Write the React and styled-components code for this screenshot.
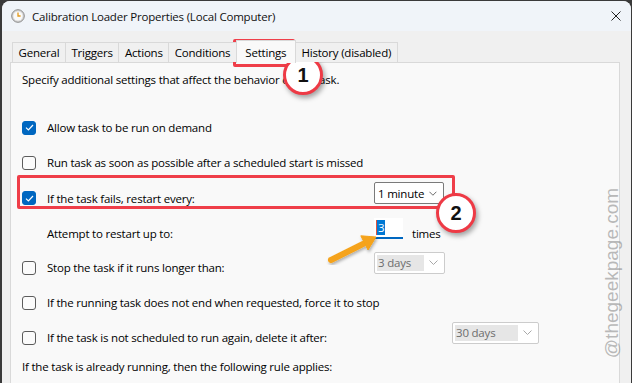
import React from 'react';
import styled, { createGlobalStyle } from 'styled-components';

const GlobalStyle = createGlobalStyle`
  html, body {
    margin: 0;
    height: 100%;
    overflow: hidden;
    background: #3a3a3a;
  }
  body {
    font-family: 'Open Sans', 'Noto Sans', sans-serif;
    font-size: 11.5px;
    letter-spacing: -0.2px;
    color: #000;
  }
  #root {
    height: 100%;
  }
`;

const Page = styled.div`
  position: relative;
  height: 100%;
`;

const Window = styled.div`
  display: flex;
  flex-direction: column;
  height: calc(100% - 1px);
  margin: 1px 1px 0 2px;
  border-radius: 8px 8px 0 0;
  background: #f0f0f0;
  overflow: hidden;
`;

const TitleBar = styled.div`
  flex: none;
  display: flex;
  align-items: center;
  gap: 7px;
  height: 30px;
  padding: 0 10px 0 9px;
  background: #f0f4f9;
`;

const Title = styled.span`
  flex: 1;
  color: #111;
`;

const Body = styled.div`
  flex: 1;
  display: flex;
  flex-direction: column;
  padding: 11px 11px 0 8px;
`;

const TabStrip = styled.div`
  display: flex;
  padding-left: 2px;
  position: relative;
  z-index: 1;
`;

const Tab = styled.div`
  display: flex;
  align-items: center;
  height: ${(p) => (p.$active ? '22px' : '19px')};
  margin-top: ${(p) => (p.$active ? '-2px' : '0')};
  margin-bottom: ${(p) => (p.$active ? '-1px' : '0')};
  margin-left: -1px;
  padding: 0 ${(p) => (p.$active ? '8.5px' : '5.5px')};
  border: 1px solid #d9d9d9;
  border-bottom: none;
  background: ${(p) => (p.$active ? '#f9f9f9' : '#f0f0f0')};
  white-space: nowrap;
  &:first-child {
    margin-left: 0;
  }
`;

const Panel = styled.div`
  flex: 1;
  border: 1px solid #d9d9d9;
  border-bottom: none;
  background: #f9f9f9;
  padding: 9px 0 0 11px;
`;

const Intro = styled.div`
  line-height: 16px;
  white-space: nowrap;
`;

const Rows = styled.div`
  margin-top: 22px;
`;

const Row = styled.div`
  display: flex;
  align-items: center;
  height: ${(p) => p.$h || 35}px;
`;

const CheckSlot = styled.div`
  flex: none;
  width: 25px;
  display: flex;
  align-items: center;
`;

const Box = styled.div`
  box-sizing: border-box;
  width: 14px;
  height: 14px;
  border-radius: 3px;
  border: 1px solid ${(p) => (p.$checked ? '#0067c0' : '#5c5c5c')};
  background: ${(p) => (p.$checked ? '#0067c0' : '#fbfbfb')};
  display: flex;
  align-items: center;
  justify-content: center;
`;

const Label = styled.div`
  flex: none;
  width: ${(p) => p.$w || 327}px;
  white-space: nowrap;
`;

const Select = styled.div`
  box-sizing: border-box;
  flex: none;
  display: flex;
  align-items: center;
  width: ${(p) => p.$w}px;
  height: 22px;
  margin-left: ${(p) => p.$offset || 0}px;
  margin-bottom: 10px;
  padding: 2px 6px 2px 2px;
  border: 1px solid ${(p) => (p.$disabled ? '#cccccc' : '#7a7a7a')};
  border-radius: 2px;
  background: #fff;
`;

const SelectValue = styled.div`
  flex: 1;
  align-self: stretch;
  display: flex;
  align-items: center;
  padding-left: 1px;
  margin-right: 5px;
  white-space: nowrap;
  color: ${(p) => (p.$disabled ? '#6d6d6d' : '#000')};
  background: ${(p) => (p.$disabled ? '#e6e6e6' : 'transparent')};
`;

const NumberBox = styled.div`
  box-sizing: border-box;
  flex: none;
  display: flex;
  align-items: center;
  width: 29px;
  height: 21px;
  margin-bottom: 10px;
  padding-left: 2px;
  background: #fff;
  border-bottom: 2px solid #0067c0;
`;

const Selected = styled.span`
  background: #0078d4;
  color: #fff;
  border-left: 1px solid #e0533c;
  padding: 0 1px;
  line-height: 15px;
`;

const Unit = styled.span`
  margin-left: 9px;
`;

const RedBox = styled.div`
  position: absolute;
  box-sizing: border-box;
  left: ${(p) => p.$x}px;
  top: ${(p) => p.$y}px;
  width: ${(p) => p.$w}px;
  height: ${(p) => p.$h}px;
  border: 3px solid #ef3e49;
  border-radius: 2px;
`;

const Badge = styled.div`
  position: absolute;
  box-sizing: border-box;
  left: ${(p) => p.$cx - 20}px;
  top: ${(p) => p.$cy - 20}px;
  width: 40px;
  height: 40px;
  border-radius: 50%;
  border: 3.5px solid #ee3a45;
  background: #fff;
  box-shadow: 2px 3px 5px rgba(0, 0, 0, 0.35);
  display: flex;
  align-items: center;
  justify-content: center;
  font-family: 'Liberation Sans', Arial, sans-serif;
  font-weight: 700;
  font-size: 20px;
  letter-spacing: 0;
  color: #111;
`;

const Overlay = styled.svg`
  position: absolute;
  left: 0;
  top: 0;
  pointer-events: none;
`;

const Watermark = styled.div`
  position: absolute;
  left: 612px;
  top: 272px;
  transform: translate(-50%, -50%) rotate(-90deg);
  font-family: 'Liberation Sans', Arial, sans-serif;
  font-size: 19px;
  letter-spacing: 0;
  color: rgba(140, 140, 140, 0.6);
  white-space: nowrap;
`;

const Check = ({ checked }) => (
  <CheckSlot>
    <Box $checked={checked}>
      {checked && (
        <svg width="9" height="7" viewBox="0 0 9 7">
          <path d="M1 3.6 L3.4 6 L8 1" fill="none" stroke="#fff" strokeWidth="1.2" />
        </svg>
      )}
    </Box>
  </CheckSlot>
);

const Chevron = ({ color }) => (
  <svg width="9" height="5" viewBox="0 0 9 5">
    <path d="M0.5 0.5 L4.5 4.5 L8.5 0.5" fill="none" stroke={color} strokeWidth="1" />
  </svg>
);

const Dropdown = ({ value, w, offset, disabled }) => (
  <Select $w={w} $offset={offset} $disabled={disabled}>
    <SelectValue $disabled={disabled}>{value}</SelectValue>
    <Chevron color={disabled ? '#a8a8a8' : '#555'} />
  </Select>
);

const ClockIcon = () => (
  <svg width="14" height="14" viewBox="0 0 14 14">
    <circle cx="7" cy="7" r="6.3" fill="#d8d8d8" stroke="#8a8a8a" strokeWidth="1" />
    <circle cx="7" cy="7" r="4.6" fill="#fafafa" />
    <path d="M7 3.5 V7 H9.6" fill="none" stroke="#e39a1c" strokeWidth="1.3" />
  </svg>
);

const tabs = ['General', 'Triggers', 'Actions', 'Conditions', 'Settings', 'History (disabled)'];

const App = () => (
  <Page>
    <GlobalStyle />
    <Window>
      <TitleBar>
        <ClockIcon />
        <Title>Calibration Loader Properties (Local Computer)</Title>
        <svg width="10" height="10" viewBox="0 0 10 10">
          <path d="M0.5 0.5 L9.5 9.5 M9.5 0.5 L0.5 9.5" stroke="#222" strokeWidth="1" />
        </svg>
      </TitleBar>

      <Body>
        <TabStrip>
          {tabs.map((t) => (
            <Tab key={t} $active={t === 'Settings'}>
              {t}
            </Tab>
          ))}
        </TabStrip>

        <Panel>
          <Intro>Specify additional settings that affect the behavior of the task.</Intro>

          <Rows>
            <Row>
              <Check checked />
              <Label>Allow task to be run on demand</Label>
            </Row>
            <Row>
              <Check />
              <Label>Run task as soon as possible after a scheduled start is missed</Label>
            </Row>
            <Row $h={36}>
              <Check checked />
              <Label>If the task fails, restart every:</Label>
              <Dropdown value="1 minute" w={70} />
            </Row>
            <Row $h={34}>
              <CheckSlot />
              <Label>Attempt to restart up to:</Label>
              <NumberBox>
                <Selected>3</Selected>
              </NumberBox>
              <Unit>times</Unit>
            </Row>
            <Row>
              <Check />
              <Label>Stop the task if it runs longer than:</Label>
              <Dropdown value="3 days" w={71} disabled />
            </Row>
            <Row>
              <Check />
              <Label>If the running task does not end when requested, force it to stop</Label>
            </Row>
            <Row>
              <Check />
              <Label>If the task is not scheduled to run again, delete it after:</Label>
              <Dropdown value="30 days" w={87} offset={78} disabled />
            </Row>
            <Row $h={24}>
              <Intro>If the task is already running, then the following rule applies:</Intro>
            </Row>
          </Rows>
        </Panel>
      </Body>
    </Window>

    <RedBox $x={233} $y={38} $w={62} $h={28} />
    <RedBox $x={17} $y={174} $w={438} $h={34} />
    <Badge $cx={303} $cy={74}>1</Badge>
    <Badge $cx={456} $cy={212}>2</Badge>

    <Overlay width="632" height="383">
      <defs>
        <filter id="arrowShadow" x="-20%" y="-20%" width="140%" height="140%">
          <feDropShadow dx="1" dy="2" stdDeviation="1.5" floodOpacity="0.3" />
        </filter>
      </defs>
      <g filter="url(#arrowShadow)" fill="#f5a31a" stroke="#f5a31a">
        <line x1="331" y1="259" x2="363" y2="243" strokeWidth="6" strokeLinecap="round" />
        <polygon points="376,236 368,249 360.8,234.8" strokeWidth="1" strokeLinejoin="round" />
      </g>
    </Overlay>

    <Watermark>@thegeekpage.com</Watermark>
  </Page>
);

export default App;
